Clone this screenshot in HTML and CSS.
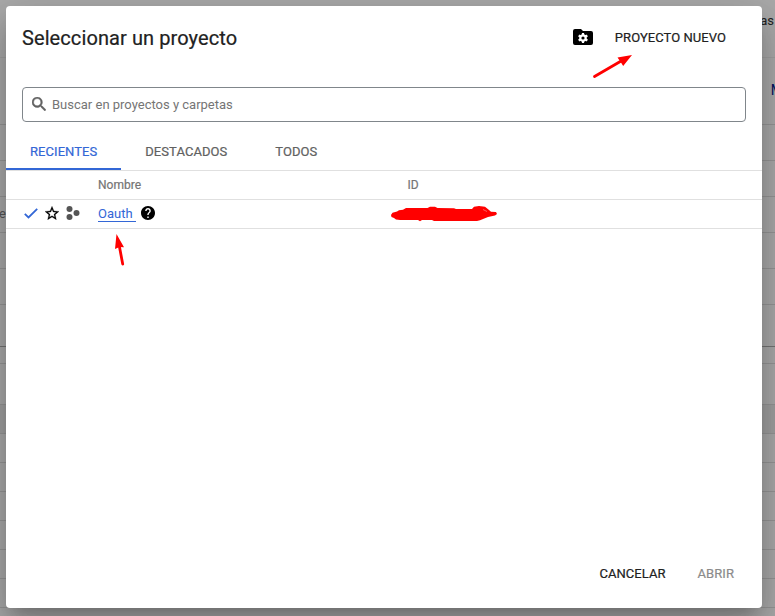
FILE: index.html
```html
<!DOCTYPE html>
<html lang="es">
<head>
<meta charset="utf-8">
<title>Seleccionar un proyecto</title>
<link rel="stylesheet" href="styles.css">
</head>
<body>
<div class="page">
  <div class="row r-top"><span class="end">as</span></div>
  <div class="row r-bar"><span class="end link">M</span></div>
  <div class="row r36"></div>
  <div class="row r36"></div>
  <div class="row r36"><span class="start">e</span></div>
  <div class="row r36"></div>
  <div class="row r36"></div>
  <div class="row r-footer"></div>
  <div class="row r-gap"></div>
  <div class="row r-head"></div>
  <div class="row r29 tinted"></div>
  <div class="row r29"></div>
  <div class="row r29"></div>
  <div class="row r29"></div>
  <div class="row r29"></div>
  <div class="row r29"></div>
  <div class="row r29"></div>
</div>

<div class="dialog">
  <header class="header">
    <h1>Seleccionar un proyecto</h1>
    <svg class="folder" width="20" height="16" viewBox="0 0 20 16">
      <path d="M2 0h6l2 2h8a2 2 0 0 1 2 2v10a2 2 0 0 1-2 2H2a2 2 0 0 1-2-2V2a2 2 0 0 1 2-2z"/>
      <g fill="#fff"><circle cx="10" cy="9" r="3.8"/>
      <path d="M8.900 4h2.200v10H8.900z"/><path d="M8.900 4h2.200v10H8.900z" transform="rotate(60 10 9)"/><path d="M8.900 4h2.200v10H8.900z" transform="rotate(120 10 9)"/></g>
      <circle cx="10" cy="9" r="1.600"/>
    </svg>
    <span class="new">PROYECTO NUEVO</span>
  </header>
  <div class="search">
    <svg width="14" height="14" viewBox="3 3 17.5 17.5"><path fill="#616161" stroke="#616161" stroke-width=".6" d="M15.500 14h-.79l-.28-.27A6.470 6.470 0 0 0 16 9.500 6.500 6.500 0 1 0 9.500 16c1.610 0 3.090-.59 4.230-1.570l.27.28v.79l5 4.990L20.490 19l-4.990-5zm-6 0C7.010 14 5 11.990 5 9.500S7.010 5 9.500 5 14 7.010 14 9.500 11.990 14 9.500 14z"/></svg>
    <span>Buscar en proyectos y carpetas</span>
  </div>
  <nav class="tabs">
    <span class="tab active">RECIENTES</span><span class="tab">DESTACADOS</span><span class="tab">TODOS</span>
  </nav>
  <div class="table">
    <div class="line head"><span class="name">Nombre</span><span>ID</span></div>
    <div class="line item">
      <div class="icons">
        <svg width="14" height="11" viewBox="0 0 14 11"><path d="M.8 5.800l3.700 3.700L13.200.9" fill="none" stroke="#3367d6" stroke-width="1.800"/></svg>
        <svg class="star" width="14" height="14" viewBox="2 2 20 19"><path stroke="#000" stroke-width=".4" d="M22 9.240l-7.190-.62L12 2 9.190 8.630 2 9.240l5.460 4.730L5.820 21 12 17.270 18.180 21l-1.630-7.030L22 9.240zM12 15.400l-3.760 2.270 1-4.280-3.320-2.880 4.380-.38L12 6.100l1.710 4.040 4.380.38-3.320 2.880 1 4.280L12 15.400z"/></svg>
        <svg class="dots" width="14" height="14" viewBox="0 0 14 14" fill="#555"><circle cx="3.500" cy="3" r="3"/><circle cx="3.500" cy="11" r="3"/><circle cx="10.500" cy="7" r="3"/></svg>
      </div>
      <div class="name"><span class="project">Oauth</span>
        <svg width="14" height="14" viewBox="2 2 20 20"><path d="M12 2C6.480 2 2 6.480 2 12s4.480 10 10 10 10-4.480 10-10S17.520 2 12 2zm1 17h-2v-2h2v2zm2.070-7.750l-.9.920C13.450 12.900 13 13.500 13 15h-2v-.5c0-1.100.45-2.100 1.170-2.830l1.240-1.260c.37-.36.59-.86.59-1.410 0-1.100-.9-2-2-2s-2 .9-2 2H8c0-2.210 1.790-4 4-4s4 1.790 4 4c0 .88-.36 1.680-.93 2.250z"/></svg>
      </div>
    </div>
  </div>
  <footer class="actions"><span>CANCELAR</span><span class="disabled">ABRIR</span></footer>
</div>

<svg class="marks" width="775" height="616" viewBox="0 0 775 616" fill="#f00">
  <path d="M594.500 76.500L622 60.500" stroke="#f00" stroke-width="2.800" stroke-linecap="round"/>
  <path d="M632 55L617.500 57.500L620.500 61.700L623.200 66z"/>
  <path d="M122.700 264L119.500 247" stroke="#f00" stroke-width="2.800" stroke-linecap="round"/>
  <path d="M116.500 234L115 249L119.500 247L124 247.200z"/>
  <path d="M391 215L392.500 212.700 397 211.500 399 210.300 403 209.700 406 208H427.500L430 206.800H435L437.500 208 454 208.300 456 209H472L474 206.800 479 206 485 206.800 489 210 491 211.800 496 212 497 214 495 215.500 488 217 480 220.300 477 221H434L432 220H422L420 221.200 418 220H400L396 219.400 394 218 391.500 217z"/>
  <path d="M483 209.500l4 2" stroke="#fff" stroke-width=".6" opacity=".6"/>
</svg>
</body>
</html>
```
FILE: styles.css
```css
* { box-sizing: border-box; }
body {
  margin: 0;
  width: 775px;
  height: 616px;
  overflow: hidden;
  position: relative;
  background: #aaa;
  font-family: Roboto, "Liberation Sans", sans-serif;
  font-size: 13px;
  line-height: 16px;
  color: #212121;
}
.page { display: flex; flex-direction: column; }
.row { display: flex; flex-shrink: 0; align-items: center; justify-content: space-between; border-bottom: 1px solid #969696; }
.start { color: #555; margin-left: -1px; padding-bottom: 2px; }
.end { margin-left: auto; }
.r-top { height: 58px; padding: 0 1px 15px; border-bottom-color: #a0a0a0; }
.r-bar { height: 67px; }
.link { color: #00105e; font-size: 14px; margin-right: -8px; padding-bottom: 2px; }
.r36 { height: 36px; }
.r-footer { height: 42px; border-bottom: 1px solid #747474; }
.r-gap { height: 17px; }
.r-head { height: 41px; }
.r29 { height: 29px; }
.tinted { background: #a1a1a1; }

.dialog {
  position: absolute;
  inset: 6px 13px 8px 6px;
  display: flex;
  flex-direction: column;
  background: #fff;
  border-radius: 4px;
  box-shadow: 0 11px 15px -7px rgba(0,0,0,.2), 0 24px 38px 3px rgba(0,0,0,.14), 0 9px 46px 8px rgba(0,0,0,.12);
}
.header { display: flex; align-items: center; height: 64px; padding: 0 36px 0 16px; }
h1 { margin: 0 auto 0 0; font-size: 20px; font-weight: 400; line-height: 28px; letter-spacing: .09px; -webkit-text-stroke: .2px; }
.folder { margin: 0 22px 2px 0; }
.new, .tab, .actions { font-weight: 400; letter-spacing: .06px; -webkit-text-stroke: .2px; }
.new { padding-bottom: 1px; }
.search {
  display: flex;
  align-items: center;
  gap: 6px;
  height: 35px;
  margin: 17px 16px 0;
  padding-left: 9px;
  border: 1px solid #80868b;
  border-radius: 4px;
  color: #757575;
}
.search svg { margin-bottom: 2px; }
.tabs { display: flex; height: 49px; padding-top: 6px; border-bottom: 1px solid #e0e0e0; color: #616161; }
.tab { padding: 16px 24px 0; line-height: 16px; }
.active { color: #3367d6; border-bottom: 2px solid #3367d6; }
.line { display: flex; align-items: center; height: 29px; padding-left: 18px; border-bottom: 1px solid #e0e0e0; }
.item { padding-bottom: 2px; }
.head { padding-left: 92px; font-size: 12px; letter-spacing: .04px; -webkit-text-stroke: .2px; color: #757575; }
.head .name { width: 309.5px; }
.icons { display: flex; align-items: center; width: 74px; }
.star { margin-left: 7px; }
.dots { margin-left: 7px; }
.line .name { display: flex; align-items: center; gap: 5px; }
.project { width: 38px; color: #3367d6; border-bottom: 1px solid #3367d6; padding-top: 2px; line-height: 14px; }
.actions { display: flex; justify-content: flex-end; gap: 32px; margin-top: auto; padding: 0 28px 26px; }
.disabled { color: #8b8b8b; }
.marks { position: absolute; top: 0; left: 0; }
```
